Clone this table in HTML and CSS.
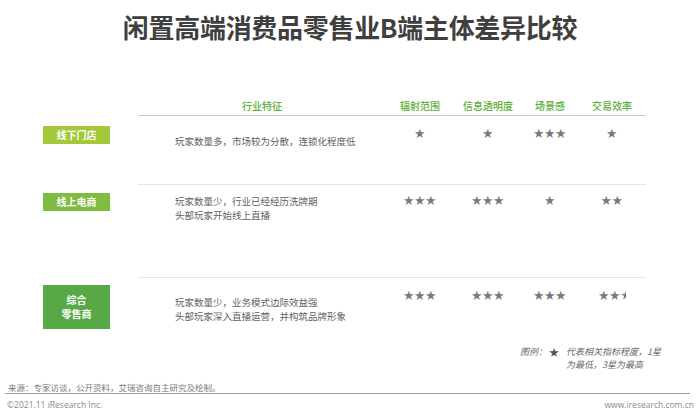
FILE: index.html
```html
<!DOCTYPE html>
<html lang="zh-CN">
<head>
<meta charset="utf-8">
<link rel="stylesheet" href="styles.css">
</head>
<body>
<div class="page">
  <h1 class="title">闲置高端消费品零售业B端主体差异比较</h1>
  <div class="table">
    <div class="row head">
      <div class="lab"></div>
      <div class="c feat">行业特征</div>
      <div class="c">辐射范围</div>
      <div class="c">信息透明度</div>
      <div class="c">场景感</div>
      <div class="c">交易效率</div>
    </div>
    <div class="row r1">
      <div class="lab"><span class="tag t1">线下门店</span></div>
      <div class="c txt">玩家数量多，市场较为分散，连锁化程度低</div>
      <div class="c st">★</div>
      <div class="c st">★</div>
      <div class="c st">★★★</div>
      <div class="c st">★</div>
    </div>
    <div class="row r2">
      <div class="lab"><span class="tag t2">线上电商</span></div>
      <div class="c txt">玩家数量少，行业已经经历洗牌期<br>头部玩家开始线上直播</div>
      <div class="c st">★★★</div>
      <div class="c st">★★★</div>
      <div class="c st">★</div>
      <div class="c st">★★</div>
    </div>
    <div class="row r3">
      <div class="lab"><span class="tag t3">综合<br>零售商</span></div>
      <div class="c txt">玩家数量少，业务模式边际效益强<br>头部玩家深入直播运营，并构筑品牌形象</div>
      <div class="c st">★★★</div>
      <div class="c st">★★★</div>
      <div class="c st">★★★</div>
      <div class="c st">★★<svg class="half" width="5" height="10" viewBox="0 0 5 10"><polygon points="5,0.6 5,7.4 2.1,9.4 3.1,6 0.3,3.9 3.8,3.8" fill="#7a7a7a"/></svg></div>
    </div>
  </div>
  <div class="legend">
    <span class="lg-k">图例：</span>
    <span class="lg-s">★</span>
    <span class="lg-t">代表相关指标程度，1星<br>为最低，3星为最高</span>
  </div>
  <div class="footer">
    <div class="source">来源：专家访谈，公开资料，艾瑞咨询自主研究及绘制。</div>
    <div class="bottom">
      <span class="copy">©2021.11 iResearch Inc.</span>
      <span class="url">www.iresearch.com.cn</span>
    </div>
  </div>
</div>
</body>
</html>
```
FILE: styles.css
```css
html, body {
  margin: 0;
  padding: 0;
  background: #fff;
}
.page {
  width: 700px;
  height: 420px;
  overflow: hidden;
  font-family: "Noto Sans CJK SC", "Liberation Sans", sans-serif;
  color: #595959;
}
.title {
  margin: 0;
  padding-top: 10px;
  height: 34px;
  line-height: 34px;
  font-size: 26px;
  font-weight: 700;
  text-align: center;
  color: #3f3f3f;
  letter-spacing: -0.3px;
}
.row {
  display: grid;
  grid-template-columns: 138px 248px 68px 68px 56px 68px;
}
.c {
  text-align: center;
}
.head .c {
  padding-top: 55px;
  line-height: 14px;
  height: 16px;
  font-size: 10px;
  font-weight: 500;
  color: #5cae3a;
  border-bottom: 1px solid #c8c8c8;
}
.lab {
  padding-left: 43px;
}
.tag {
  display: flex;
  align-items: center;
  justify-content: center;
  width: 67px;
  height: 18px;
  color: #fff;
  font-size: 10px;
  font-weight: 700;
  line-height: 14px;
  text-align: center;
}
.t1 { background: #a3c83a; }
.t2 { background: #7fbd42; }
.t3 { background: #58a946; height: 44px; }
.txt {
  text-align: left;
  padding-left: 37px;
  font-size: 9.5px;
  line-height: 14px;
  color: #5f5f5f;
}
.st {
  font-size: 10.5px;
  line-height: 12px;
  color: #7a7a7a;
  letter-spacing: 0.5px;
}
.half {
  display: inline-block;
  vertical-align: top;
  margin-top: 1px;
}
.r1 { height: 68px; }
.r1 .lab { padding-top: 10px; }
.r1 .txt { padding-top: 18px; }
.r1 .st { padding-top: 11px; }
.r2 { height: 93px; }
.r2 .c, .r3 .c { border-top: 1px solid #e6e6e6; }
.r2 .lab { padding-top: 9px; }
.r2 .txt { padding-top: 9px; }
.r2 .st { padding-top: 9px; }
.r3 { height: 61px; }
.r3 .lab { padding-top: 8px; }
.r3 .txt { padding-top: 17px; }
.r3 .st { padding-top: 11px; }
.legend {
  display: flex;
  justify-content: flex-end;
  padding-right: 39px;
  margin-top: 7px;
  font-size: 9px;
  line-height: 13px;
  font-style: italic;
  color: #6a6a6a;
}
.lg-s {
  font-style: normal;
  font-size: 10px;
  color: #555;
  margin: 0 7px 0 2px;
}
.footer {
  margin-top: 11px;
  padding: 0 10px 0 5px;
}
.source {
  padding-left: 3px;
  font-size: 8.5px;
  line-height: 11px;
  color: #7a7a7a;
  border-bottom: 1px solid #a0a0a0;
}
.bottom {
  display: flex;
  justify-content: space-between;
  margin-top: 5px;
  padding: 0 0 0 2px;
  font-family: "Open Sans", "Liberation Sans", sans-serif;
  font-size: 8.5px;
  line-height: 12px;
  color: #8a8a8a;
}
.url {
  margin-right: -4px;
}
```
